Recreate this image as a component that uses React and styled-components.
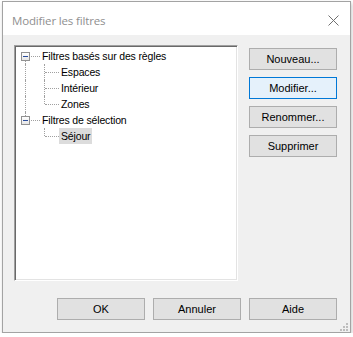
import React from "react";
import styled, { createGlobalStyle, css } from "styled-components";

const Global = createGlobalStyle`
  html, body { margin: 0; padding: 0; background: #ffffff; }
  #root { padding: 1px 0 0 2px; }
`;

const Window = styled.div`
  position: relative;
  width: 349px;
  height: 332px;
  box-sizing: border-box;
  border: 1px solid #a3a3a3;
  background: #f0f0f0;
  box-shadow: 1px 2px 4px rgba(0, 0, 0, 0.22);
  display: flex;
  flex-direction: column;
`;

const TitleBar = styled.div`
  height: 33px;
  flex: none;
  background: #ffffff;
  display: flex;
  align-items: center;
  justify-content: space-between;
  padding: 3px 11px 0 9px;
  box-sizing: border-box;
`;

const Title = styled.span`
  font-family: "Open Sans", "Noto Sans", sans-serif;
  font-size: 11.5px;
  letter-spacing: -0.15px;
  color: #8f8f8f;
`;

const CloseIcon = styled.svg`
  width: 11px;
  height: 11px;
  display: block;
`;

const Body = styled.div`
  flex: 1;
  display: flex;
  flex-direction: column;
  padding: 10px 13px 0 11px;
`;

const TopRow = styled.div`
  display: flex;
  gap: 11px;
`;

const TreeBox = styled.div`
  width: 224px;
  height: 236px;
  box-sizing: border-box;
  background: #ffffff;
  border: 1px solid;
  border-color: #a0a0a0 #ffffff #ffffff #a0a0a0;
  box-shadow: inset 1px 1px 0 #696969, inset -1px -1px 0 #e3e3e3;
  padding: 2px 1px 1px 1px;
`;

const Row = styled.div`
  display: flex;
  height: 16px;
  align-items: stretch;
`;

const vLine = css`
  content: "";
  position: absolute;
  left: 9px;
  border-left: 1px dotted #a0a0a0;
`;

const Indent = styled.div`
  position: relative;
  width: 19px;
  flex: none;
  ${(p) =>
    p.$line &&
    css`
      &::before {
        ${vLine};
        top: 0;
        bottom: 0;
      }
    `}
`;

const Connector = styled.div`
  position: relative;
  width: 24px;
  flex: none;
  &::before {
    ${vLine};
    top: ${(p) => (p.$up ? "0" : "8px")};
    bottom: ${(p) => (p.$down ? "0" : "8px")};
  }
  &::after {
    content: "";
    position: absolute;
    left: 10px;
    right: 0;
    top: 8px;
    border-top: 1px dotted #a0a0a0;
  }
`;

const Expander = styled.div`
  position: absolute;
  left: 5px;
  top: 4px;
  width: 9px;
  height: 9px;
  box-sizing: border-box;
  border: 1px solid #919191;
  background: linear-gradient(#ffffff, #e6e6e6);
  z-index: 1;
  display: flex;
  align-items: center;
  justify-content: center;
  &::before {
    content: "";
    width: 5px;
    height: 1px;
    background: #2a4d9b;
  }
`;

const Label = styled.span`
  font-family: "Liberation Sans", Arial, sans-serif;
  font-size: 10.5px;
  letter-spacing: -0.15px;
  line-height: 16px;
  color: #000000;
  padding: 0 2px;
  white-space: nowrap;
  background: ${(p) => (p.$selected ? "#dcdcdc" : "transparent")};
`;

const ButtonColumn = styled.div`
  display: flex;
  flex-direction: column;
  gap: 7px;
  margin-top: 3px;
`;

const Button = styled.button`
  width: 88px;
  height: 22px;
  box-sizing: border-box;
  padding: 0;
  margin: 0;
  font-family: "Liberation Sans", Arial, sans-serif;
  font-size: 11px;
  color: #000000;
  border: 1px solid ${(p) => (p.$primary ? "#0078d7" : "#adadad")};
  background: ${(p) => (p.$primary ? "#e5f1fb" : "#e1e1e1")};
  border-radius: 0;
  outline: none;
`;

const BottomRow = styled.div`
  display: flex;
  justify-content: flex-end;
  gap: 8px;
  margin-top: 17px;
`;

const Grip = styled.svg`
  position: absolute;
  right: 2px;
  bottom: 1px;
  width: 9px;
  height: 9px;
`;

function TreeRow({ indentLine, hasIndent, up, down, expander, selected, children }) {
  return (
    <Row>
      {hasIndent && <Indent $line={indentLine} />}
      <Connector $up={up} $down={down}>
        {expander && <Expander />}
      </Connector>
      <Label $selected={selected}>{children}</Label>
    </Row>
  );
}

export default function App() {
  return (
    <>
      <Global />
      <Window>
        <TitleBar>
          <Title>Modifier les filtres</Title>
          <CloseIcon viewBox="0 0 11 11">
            <path d="M0.5 0.5 L10.5 10.5 M10.5 0.5 L0.5 10.5" stroke="#707070" strokeWidth="1" fill="none" />
          </CloseIcon>
        </TitleBar>
        <Body>
          <TopRow>
            <TreeBox>
              <TreeRow expander down>
                Filtres basés sur des règles
              </TreeRow>
              <TreeRow hasIndent indentLine up down>
                Espaces
              </TreeRow>
              <TreeRow hasIndent indentLine up down>
                Intérieur
              </TreeRow>
              <TreeRow hasIndent indentLine up>
                Zones
              </TreeRow>
              <TreeRow expander up>
                Filtres de sélection
              </TreeRow>
              <TreeRow hasIndent up selected>
                Séjour
              </TreeRow>
            </TreeBox>
            <ButtonColumn>
              <Button>Nouveau...</Button>
              <Button $primary>Modifier...</Button>
              <Button>Renommer...</Button>
              <Button>Supprimer</Button>
            </ButtonColumn>
          </TopRow>
          <BottomRow>
            <Button>OK</Button>
            <Button>Annuler</Button>
            <Button>Aide</Button>
          </BottomRow>
        </Body>
        <Grip viewBox="0 0 9 9">
          <rect x="7" y="1" width="2" height="2" fill="#bdbdbd" />
          <rect x="4" y="4" width="2" height="2" fill="#bdbdbd" />
          <rect x="7" y="4" width="2" height="2" fill="#bdbdbd" />
          <rect x="1" y="7" width="2" height="2" fill="#bdbdbd" />
          <rect x="4" y="7" width="2" height="2" fill="#bdbdbd" />
          <rect x="7" y="7" width="2" height="2" fill="#bdbdbd" />
        </Grip>
      </Window>
    </>
  );
}
